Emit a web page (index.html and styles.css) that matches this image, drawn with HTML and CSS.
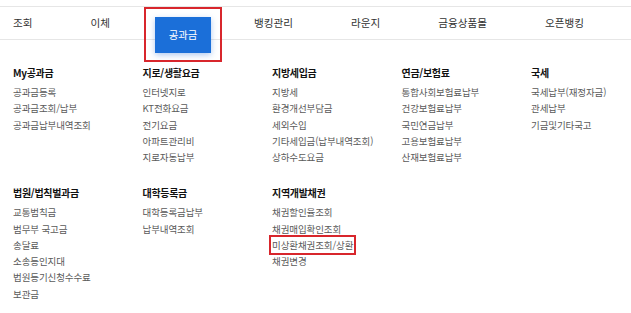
FILE: index.html
```html
<!DOCTYPE html>
<html lang="ko">
<head>
<meta charset="utf-8">
<title>공과금</title>
<link rel="stylesheet" href="styles.css">
</head>
<body>
<nav class="gnb">
  <a class="gnb-item">조회</a>
  <a class="gnb-item">이체</a>
  <a class="gnb-item is-active">공과금</a>
  <a class="gnb-item">뱅킹관리</a>
  <a class="gnb-item">라운지</a>
  <a class="gnb-item">금융상품몰</a>
  <a class="gnb-item">오픈뱅킹</a>
</nav>
<div class="menu">
  <section class="group">
    <h3 class="group-title">My공과금</h3>
    <ul class="group-list">
      <li>공과금등록</li>
      <li>공과금조회/납부</li>
      <li>공과금납부내역조회</li>
    </ul>
  </section>
  <section class="group">
    <h3 class="group-title">지로/생활요금</h3>
    <ul class="group-list">
      <li>인터넷지로</li>
      <li>KT전화요금</li>
      <li>전기요금</li>
      <li>아파트관리비</li>
      <li>지로자동납부</li>
    </ul>
  </section>
  <section class="group">
    <h3 class="group-title">지방세입금</h3>
    <ul class="group-list">
      <li>지방세</li>
      <li>환경개선부담금</li>
      <li>세외수입</li>
      <li>기타세입금(납부내역조회)</li>
      <li>상하수도요금</li>
    </ul>
  </section>
  <section class="group">
    <h3 class="group-title">연금/보험료</h3>
    <ul class="group-list">
      <li>통합사회보험료납부</li>
      <li>건강보험료납부</li>
      <li>국민연금납부</li>
      <li>고용보험료납부</li>
      <li>산재보험료납부</li>
    </ul>
  </section>
  <section class="group">
    <h3 class="group-title">국세</h3>
    <ul class="group-list">
      <li>국세납부(재정자금)</li>
      <li>관세납부</li>
      <li>기금및기타국고</li>
    </ul>
  </section>
  <section class="group">
    <h3 class="group-title">법원/법칙벌과금</h3>
    <ul class="group-list">
      <li>교통범칙금</li>
      <li>범무부 국고금</li>
      <li>송달료</li>
      <li>소송등인지대</li>
      <li>법원등기신청수수료</li>
      <li>보관금</li>
    </ul>
  </section>
  <section class="group">
    <h3 class="group-title">대학등록금</h3>
    <ul class="group-list">
      <li>대학등록금납부</li>
      <li>납부내역조회</li>
    </ul>
  </section>
  <section class="group">
    <h3 class="group-title">지역개발채권</h3>
    <ul class="group-list">
      <li>채권할인율조회</li>
      <li>채권매입확인조회</li>
      <li><span class="mark">미상환채권조회/상환</span></li>
      <li>채권변경</li>
    </ul>
  </section>
</div>
</body>
</html>
```
FILE: styles.css
```css
* { box-sizing: border-box; }
html, body { margin: 0; padding: 0; background: #fff; }
body {
  font-family: "Noto Sans CJK KR", "Noto Sans", sans-serif;
  color: #333;
  width: 631px;
  height: 313px;
  overflow: hidden;
}
.gnb {
  margin-top: 6px;
  height: 34px;
  border-top: 1px solid #e6e6e6;
  border-bottom: 1px solid #e6e6e6;
  display: flex;
  align-items: flex-start;
  gap: 30px;
  margin-left: -1px;
}
.gnb-item {
  padding: 0 14px;
  font-size: 10.6px;
  line-height: 32px;
  letter-spacing: 0;
  color: #333;
  white-space: nowrap;
}
.gnb-item.is-active {
  position: relative;
  z-index: 2;
  margin: 10px -1px 0 1px;
  height: 36px;
  line-height: 36px;
  width: 56px;
  text-align: center;
  padding: 0;
  font-size: 10.4px;
  background: #1b6fd9;
  color: #fff;
  box-shadow: 0 2px 6px rgba(30, 100, 210, 0.35);
}
.gnb-item.is-active::after {
  content: "";
  position: absolute;
  top: -10px;
  bottom: -9px;
  left: -11px;
  right: -11px;
  border: 2px solid #d8262c;
}
.menu {
  display: grid;
  grid-template-columns: repeat(5, 129.5px);
  padding: 26px 0 0 13px;
  row-gap: 21px;
}
.group-title {
  margin: 0 0 4px;
  font-size: 10px;
  line-height: 14px;
  font-weight: 700;
  letter-spacing: -0.3px;
  color: #111;
}
.group-list {
  list-style: none;
  margin: 0;
  padding: 0;
}
.group-list li {
  font-size: 9.5px;
  line-height: 16.25px;
  letter-spacing: -0.1px;
  color: #5a5a5a;
  white-space: nowrap;
}
.mark {
  outline: 2px solid #d8262c;
  outline-offset: 1px;
}
```
